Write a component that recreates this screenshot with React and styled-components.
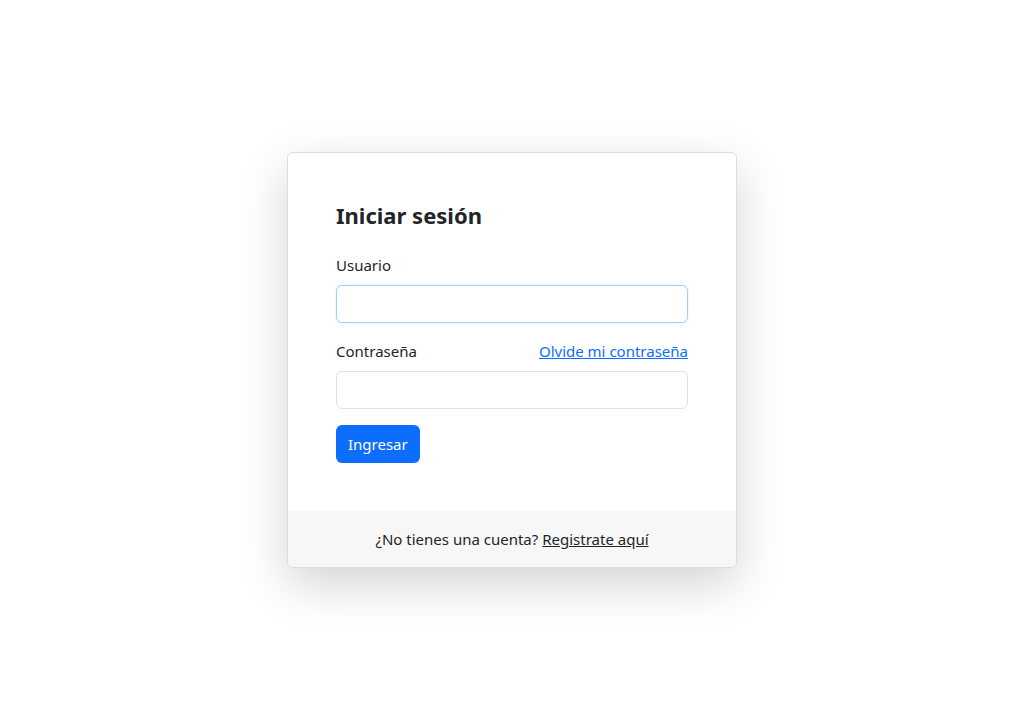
import React from "react";
import styled, { createGlobalStyle } from "styled-components";

const GlobalStyle = createGlobalStyle`
  * {
    box-sizing: border-box;
  }
  html, body {
    margin: 0;
    padding: 0;
    background: #fff;
  }
  body {
    font-family: "Noto Sans", "Open Sans", sans-serif;
    font-size: 16px;
    line-height: 24px;
    color: #212529;
  }
`;

const Page = styled.main`
  width: 100%;
  height: 720px;
  display: flex;
  align-items: center;
  justify-content: center;
`;

const Card = styled.section`
  width: 450px;
  background: #fff;
  border: 1px solid #dcdcdc;
  border-radius: 6px;
  box-shadow: 0 16px 48px rgba(0, 0, 0, 0.175);
  overflow: hidden;
`;

const CardBody = styled.form`
  padding: 48px;
  display: flex;
  flex-direction: column;
`;

const Title = styled.h4`
  margin: 0 0 24px;
  font-size: 22px;
  line-height: 28px;
  font-weight: 700;
`;

const Field = styled.div`
  margin-bottom: 16px;
`;

const LabelRow = styled.div`
  display: flex;
  justify-content: space-between;
  align-items: center;
  margin-bottom: 8px;
`;

const Label = styled.label`
  font-size: 15px;
  line-height: 24px;
`;

const Link = styled.a`
  font-size: 15px;
  line-height: 24px;
  color: ${(p) => (p.$dark ? "#212529" : "#0d6efd")};
  text-decoration: underline;
  cursor: pointer;
`;

const Input = styled.input`
  display: block;
  width: 100%;
  height: 38px;
  padding: 6px 12px;
  font: inherit;
  border: 1px solid ${(p) => (p.$focused ? "#a8c9fb" : "#dee2e6")};
  border-radius: 6px;
  outline: none;
  box-shadow: ${(p) => (p.$focused ? "0 0 0 1px rgba(13, 110, 253, 0.06)" : "none")};
`;

const Button = styled.button`
  align-self: flex-start;
  height: 38px;
  padding: 6px 12px;
  background: #0d6efd;
  color: #fff;
  border: none;
  border-radius: 6px;
  font-family: inherit;
  font-size: 15px;
  line-height: 24px;
  cursor: pointer;
`;

const Footer = styled.footer`
  background: #f7f7f7;
  padding: 16px;
  text-align: center;
  font-size: 15px;
  line-height: 24px;
`;

const App = () => (
  <>
    <GlobalStyle />
    <Page>
      <Card>
        <CardBody onSubmit={(e) => e.preventDefault()}>
          <Title>Iniciar sesión</Title>
          <Field>
            <LabelRow>
              <Label htmlFor="usuario">Usuario</Label>
            </LabelRow>
            <Input id="usuario" type="text" $focused />
          </Field>
          <Field>
            <LabelRow>
              <Label htmlFor="password">Contraseña</Label>
              <Link>Olvide mi contraseña</Link>
            </LabelRow>
            <Input id="password" type="password" />
          </Field>
          <Button type="submit">Ingresar</Button>
        </CardBody>
        <Footer>
          ¿No tienes una cuenta? <Link $dark>Registrate aquí</Link>
        </Footer>
      </Card>
    </Page>
  </>
);

export default App;
